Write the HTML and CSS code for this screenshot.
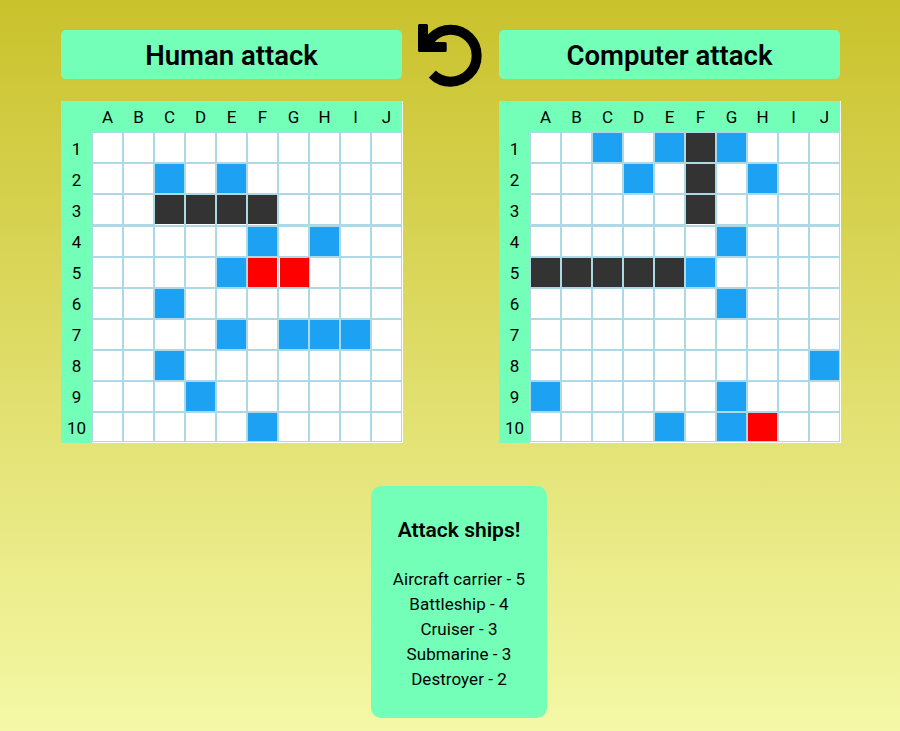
FILE: index.html
```html
<!DOCTYPE html>
<html lang="en">
<head>
    <meta charset="UTF-8">
    <title>Battleship</title>
    <link rel="stylesheet" href="styles.css">
</head>
<body>

<div class="top-row">
    <h1 class="board-title">Human attack</h1>
    <button class="reset" type="button" aria-label="Restart">
        <svg viewBox="0 0 64 64" width="64" height="64">
            <path d="M0 1.500a1.500 1.500 0 0 1 1.500-1.500h7a1.500 1.500 0 0 1 1.500 1.500V18H27.200a1.500 1.500 0 0 1 1.500 1.500v7a1.500 1.500 0 0 1-1.500 1.500H1.500a1.500 1.500 0 0 1-1.500-1.500z"/>
            <path d="M14.300 50.100A26 26 0 1 0 14.300 13.300L7 21" fill="none" stroke="#000" stroke-width="10"/>
        </svg>
    </button>
    <h1 class="board-title">Computer attack</h1>
</div>

<div class="boards">
    <div class="board" id="human"></div>
    <div class="board" id="computer"></div>
</div>

<div class="ships">
    <h2>Attack ships!</h2>
    <p>Aircraft carrier - 5</p>
    <p>Battleship - 4</p>
    <p>Cruiser - 3</p>
    <p>Submarine - 3</p>
    <p>Destroyer - 2</p>
</div>

<script>
    const letters = "ABCDEFGHIJ";
    // w = water (miss), s = sunk, h = hit
    const humanShots = {
        w: ["C2", "E2", "F4", "H4", "E5", "C6", "E7", "G7", "H7", "I7", "C8", "D9", "F10"],
        s: ["C3", "D3", "E3", "F3"],
        h: ["F5", "G5"]
    };
    const computerShots = {
        w: ["C1", "E1", "G1", "D2", "H2", "G4", "F5", "G6", "J8", "A9", "G9", "E10", "G10"],
        s: ["F1", "F2", "F3", "A5", "B5", "C5", "D5", "E5"],
        h: ["H10"]
    };

    function drawBoard(id, shots) {
        const board = document.getElementById(id);
        let html = '<div class="head low"></div>';
        for (const l of letters) {
            html += `<div class="head low">${l}</div>`;
        }
        for (let row = 1; row <= 10; row++) {
            html += `<div class="head${row > 3 ? " low" : ""}">${row}</div>`;
            for (const l of letters) {
                const name = l + row;
                let cls = "cell";
                if (shots.w.includes(name)) cls += " miss";
                if (shots.s.includes(name)) cls += " sunk";
                if (shots.h.includes(name)) cls += " hit";
                html += `<div class="${cls}"></div>`;
            }
        }
        board.innerHTML = html;
    }

    drawBoard("human", humanShots);
    drawBoard("computer", computerShots);
</script>

</body>
</html>
```

FILE: styles.css
```css
body {
    margin: 0;
    height: 731px;
    box-sizing: border-box;
    padding-top: 24px;
    font-family: Roboto, sans-serif;
    background: linear-gradient(#c9c22c, #f5f8a6);
    color: #000;
    overflow: hidden;
}
.top-row {
    display: flex;
    align-items: flex-start;
    margin-left: 61px;
}
.board-title {
    width: 341px;
    height: 49px;
    margin: 6px 0 0;
    background-color: #74ffb9;
    border-radius: 5px;
    font-size: 27.5px;
    font-weight: 600;
    line-height: 51px;
    text-align: center;
}
.reset {
    width: 97px;
    height: 64px;
    padding: 0 0 0 16px;
    background: none;
    border: none;
}
.reset svg {
    display: block;
}
.boards {
    display: flex;
    gap: 96px;
    margin-left: 61px;
    margin-top: 13px;
}
.board {
    display: grid;
    grid-template-columns: repeat(11, 31px);
    grid-template-rows: 31px 31px 31px 32px repeat(7, 31px);
    width: 342px;
    height: 342px;
    background: #fff;
}
.head {
    display: flex;
    align-items: center;
    justify-content: center;
    background-color: #74ffb9;
    font-size: 17px;
    padding-top: 2px;
    box-sizing: border-box;
}
.head.low {
    padding-top: 0;
}
.cell {
    background: linear-gradient(#fff 29px, #add8e6 29px);
    border: 1px solid #add8e6;
}
.cell:nth-last-child(-n+10) {
    height: 30px;
    box-sizing: border-box;
}
.miss {
    background: linear-gradient(#1da1f2 29px, #add8e6 29px);
}
.sunk {
    background: linear-gradient(#333 29px, #fff 29px);
}
.hit {
    background: #f00;
}
.hit:has(+ .hit) {
    border-right-color: #fff;
}
.hit + .hit {
    background: linear-gradient(to right, #fff 1px, #f00 1px);
    border-right-color: #f00;
}
.ships {
    width: 176px;
    height: 232px;
    box-sizing: border-box;
    margin: 43px 0 0 371px;
    padding-top: 31px;
    background-color: #74ffb9;
    border-radius: 10px;
    text-align: center;
}
.ships h2 {
    margin: 0 0 24px;
    font-size: 21px;
    font-weight: 600;
    line-height: 26px;
}
.ships p {
    margin: 0;
    font-size: 17px;
    letter-spacing: 0.05px;
    line-height: 25px;
}
```
